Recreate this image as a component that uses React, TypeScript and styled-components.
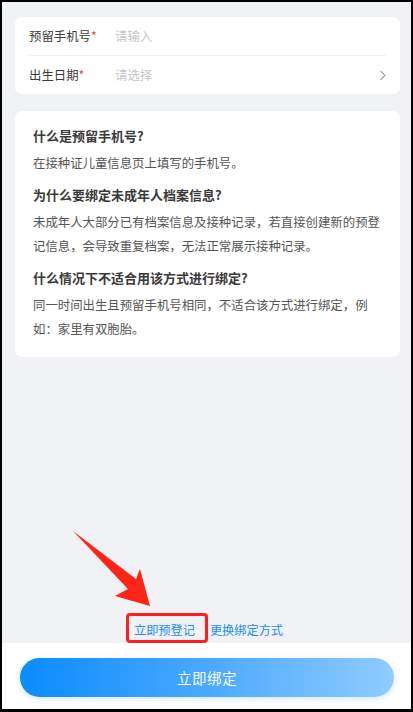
import styled, { createGlobalStyle } from 'styled-components';

const GlobalStyle = createGlobalStyle`
  html, body {
    margin: 0;
    padding: 0;
    background: #000;
  }
  * {
    box-sizing: border-box;
  }
`;

const Frame = styled.div`
  width: 413px;
  height: 712px;
  border-style: solid;
  border-color: #000;
  border-width: 2px 2px 3px 2px;
  display: flex;
  flex-direction: column;
  background: #f1f2f6;
  font-family: 'Noto Sans CJK SC', 'Noto Sans', sans-serif;
  position: relative;
  overflow: hidden;
`;

const Main = styled.div`
  flex: 1;
  display: flex;
  flex-direction: column;
  padding: 15px 11px 3px 13px;
  gap: 17px;
`;

const Card = styled.div`
  background: #fff;
  border-radius: 7px;
`;

const FormRow = styled.div<{ $divider?: boolean }>`
  height: 38px;
  margin: 0 14px;
  display: flex;
  align-items: center;
  border-bottom: ${(p) => (p.$divider ? '1px solid #eef0f3' : 'none')};
  box-sizing: content-box;
`;

const Label = styled.span`
  width: 86px;
  flex-shrink: 0;
  font-size: 12.4px;
  color: #3c3c3c;
`;

const Star = styled.span`
  color: #ff2a2a;
`;

const Placeholder = styled.span`
  flex: 1;
  font-size: 12.4px;
  color: #c4c6cb;
`;

const Chevron = styled.svg`
  width: 8px;
  height: 11px;
  margin-right: -1px;
`;

const InfoCard = styled(Card)`
  padding: 13px 18px 16px 18px;
`;

const Section = styled.div`
  & + & {
    margin-top: 8px;
  }
`;

const Title = styled.div`
  font-size: 13px;
  font-weight: 700;
  line-height: 24px;
  color: #3a3a3a;
  margin-bottom: 3px;
`;

const Body = styled.div`
  font-size: 12.4px;
  line-height: 24px;
  color: #555;
  line-break: strict;
`;

const Spacer = styled.div`
  flex: 1;
`;

const LinkRow = styled.div`
  display: flex;
  justify-content: center;
  gap: 15px;
  line-height: 20px;
  position: relative;
  left: 1px;
`;

const LinkText = styled.span`
  font-size: 12.2px;
  color: #1a8cf7;
  position: relative;
`;

const Highlight = styled.span`
  position: absolute;
  left: -8px;
  right: -13px;
  top: -7px;
  bottom: -3px;
  border: 3px solid #ff1d1d;
  border-radius: 4px;
`;

const Arrow = styled.svg`
  position: absolute;
  left: 0;
  top: 0;
  width: 413px;
  height: 712px;
  pointer-events: none;
`;

const Footer = styled.div`
  height: 66px;
  background: #fff;
  padding: 15px 17px 0 18px;
`;

const BindButton = styled.button`
  width: 100%;
  height: 39px;
  border: none;
  border-radius: 20px;
  background: linear-gradient(90deg, #0a8bff 0%, #4aa9ff 50%, #90ccff 100%);
  box-shadow: 0 2px 6px rgba(30, 130, 230, 0.18);
  color: #fff;
  font-family: inherit;
  font-size: 14.5px;
  letter-spacing: 0.5px;
`;

const sections = [
  {
    title: '什么是预留手机号?',
    body: '在接种证儿童信息页上填写的手机号。',
  },
  {
    title: '为什么要绑定未成年人档案信息?',
    body: '未成年人大部分已有档案信息及接种记录，若直接创建新的预登记信息，会导致重复档案，无法正常展示接种记录。',
  },
  {
    title: '什么情况下不适合用该方式进行绑定?',
    body: '同一时间出生且预留手机号相同，不适合该方式进行绑定，例如：家里有双胞胎。',
  },
];

export default function App() {
  return (
    <>
      <GlobalStyle />
      <Frame>
        <Main>
          <Card>
            <FormRow $divider>
              <Label>
                预留手机号<Star>*</Star>
              </Label>
              <Placeholder>请输入</Placeholder>
            </FormRow>
            <FormRow>
              <Label>
                出生日期<Star>*</Star>
              </Label>
              <Placeholder>请选择</Placeholder>
              <Chevron viewBox="0 0 8 11">
                <path d="M1.5 1 L6 5.5 L1.5 10" fill="none" stroke="#a4a6ad" strokeWidth="1.2" />
              </Chevron>
            </FormRow>
          </Card>

          <InfoCard>
            {sections.map((s) => (
              <Section key={s.title}>
                <Title>{s.title}</Title>
                <Body>{s.body}</Body>
              </Section>
            ))}
          </InfoCard>

          <Spacer />

          <LinkRow>
            <LinkText>
              立即预登记
              <Highlight />
            </LinkText>
            <LinkText>更换绑定方式</LinkText>
          </LinkRow>
        </Main>

        <Footer>
          <BindButton>立即绑定</BindButton>
        </Footer>

        <Arrow viewBox="0 0 413 712">
          <polygon
            points="71,529 134,577 138,567 148,604 113,594 126,587"
            fill="#ff2416"
          />
        </Arrow>
      </Frame>
    </>
  );
}
